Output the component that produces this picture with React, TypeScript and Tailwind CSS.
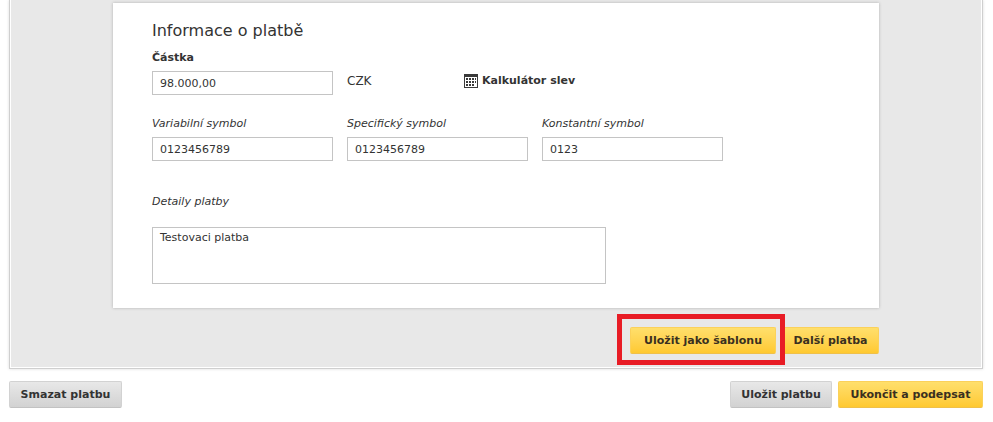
import type { ButtonHTMLAttributes, InputHTMLAttributes } from "react";
import { clsx } from "clsx";

type ActionButtonProps = ButtonHTMLAttributes<HTMLButtonElement> & {
  tone: "yellow" | "gray";
  width: string;
};

function ActionButton({ tone, width, children, ...rest }: ActionButtonProps) {
  return (
    <button
      type="button"
      className={clsx(
        "h-[27px] cursor-pointer whitespace-nowrap rounded-xs border text-[11px] leading-4 font-bold",
        width,
        tone === "yellow"
          ? "border-[#fbd15a] border-b-[#efc04a] bg-linear-to-b from-[#ffdf6b] to-[#ffc92f] text-[#3a3020]"
          : "border-[#d2d2d2] border-b-[#c2c2c2] bg-linear-to-b from-[#e8e8e8] to-[#d2d2d2] text-[#333333]",
      )}
      {...rest}
    >
      {children}
    </button>
  );
}

function TextInput(props: InputHTMLAttributes<HTMLInputElement>) {
  return (
    <input
      type="text"
      className="h-6 w-[181px] border border-[#c4c4c4] bg-white px-[7px] text-[11px] text-[#333333]"
      {...props}
    />
  );
}

function CalculatorIcon() {
  return (
    <svg width="14" height="14" viewBox="0 0 14 14" shapeRendering="crispEdges" aria-hidden="true">
      <rect x="0.5" y="0.5" width="13" height="13" fill="#fff" stroke="#3a3a3a" />
      <path d="M1 1h12v2H1z" fill="#3a3a3a" />
      <path
        d="M2 4h2v2H2zM5 4h2v2H5zM8 4h2v2H8zM11 4h1v2h-1zM2 7h2v2H2zM5 7h2v2H5zM8 7h2v2H8zM11 7h1v2h-1zM2 10h2v2H2zM5 10h2v2H5zM8 10h2v2H8z"
        fill="#3a3a3a"
      />
    </svg>
  );
}

const symbols = [
  { id: "variabilni", label: "Variabilní symbol", value: "0123456789" },
  { id: "specificky", label: "Specifický symbol", value: "0123456789" },
  { id: "konstantni", label: "Konstantní symbol", value: "0123" },
];

export default function App() {
  return (
    <main className="bg-white pr-[10px] pb-3 pl-[9px] font-['DejaVu_Sans',Verdana,sans-serif] text-[11px] leading-4 text-[#333333]">
      <div className="border border-t-0 border-[#cfcfcf] bg-[#e8e8e8] shadow-[inset_-1px_-1px_0_#fff,inset_1px_0_0_#fff,0_0_3px_#dddddd]">
        <div className="mx-auto max-w-[766px] pt-[3px] pb-[14px]">
          <section className="border border-white bg-white px-[38px] pt-[15px] pb-[23px] shadow-[0_0_3px_#b0b0b0]">
            <h2 className="text-base leading-6">Informace o platbě</h2>

            <label htmlFor="castka" className="mt-[7px] block font-bold">
              Částka
            </label>
            <div className="mt-[5px] flex items-center">
              <TextInput id="castka" defaultValue="98.000,00" />
              <span className="ml-[14px] w-[117px] pb-1 text-xs">CZK</span>
              <a href="#kalkulator" className="flex items-center gap-1 pb-1 font-bold">
                <CalculatorIcon />
                Kalkulátor slev
              </a>
            </div>

            <div className="mt-[21px] flex gap-[14px]">
              {symbols.map((symbol) => (
                <div key={symbol.id}>
                  <label htmlFor={symbol.id} className="mb-[5px] block italic">
                    {symbol.label}
                  </label>
                  <TextInput id={symbol.id} defaultValue={symbol.value} />
                </div>
              ))}
            </div>

            <label htmlFor="detaily" className="mt-[33px] block italic">
              Detaily platby
            </label>
            <textarea
              id="detaily"
              defaultValue="Testovaci platba"
              className="mt-[17px] block h-[57px] w-[454px] resize-none border border-[#c4c4c4] bg-white px-[7px] py-[2px] text-[11px] leading-4"
            />
          </section>

          <div className="mt-[19px] flex justify-end gap-[6px]">
            <div className="relative z-10 flex">
              <ActionButton tone="yellow" width="w-[146px]">
                Uložit jako šablonu
              </ActionButton>
              <div className="pointer-events-none absolute -top-[13px] -right-[9px] -bottom-[11px] -left-[13px] border-5 border-[#e81c25]" />
            </div>
            <ActionButton tone="yellow" width="w-[97px]">
              Další platba
            </ActionButton>
          </div>
        </div>
      </div>

      <div className="mt-3 flex gap-[6px]">
        <div className="flex-1">
          <ActionButton tone="gray" width="w-[113px]">
            Smazat platbu
          </ActionButton>
        </div>
        <ActionButton tone="gray" width="w-[102px]">
          Uložit platbu
        </ActionButton>
        <ActionButton tone="yellow" width="w-[145px]">
          Ukončit a podepsat
        </ActionButton>
      </div>
    </main>
  );
}
